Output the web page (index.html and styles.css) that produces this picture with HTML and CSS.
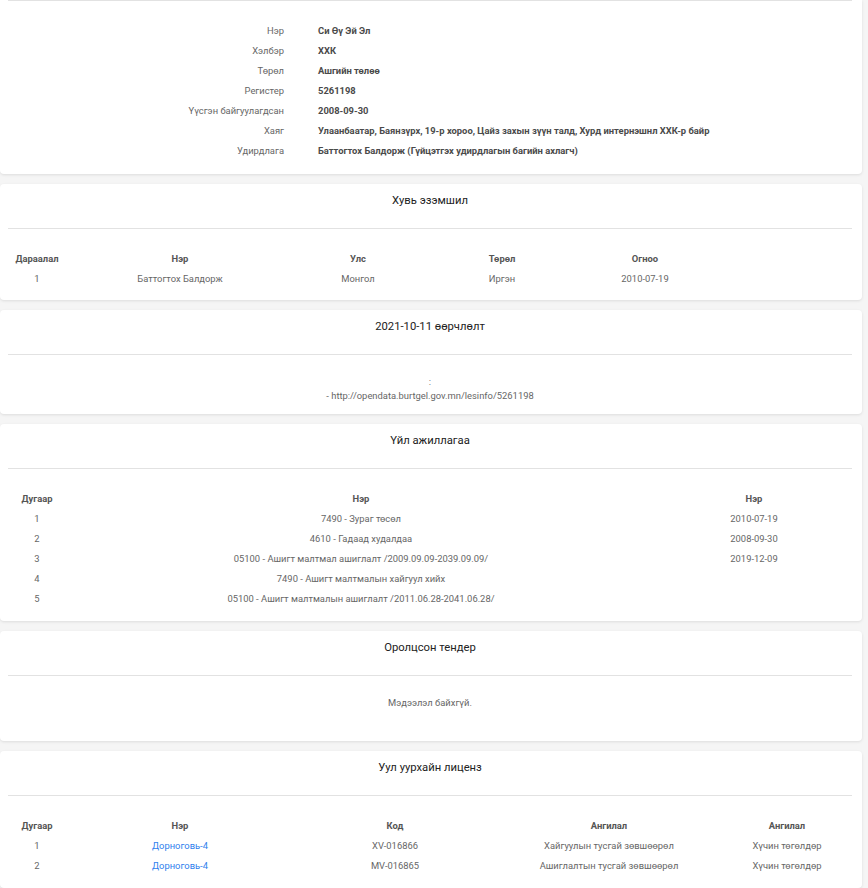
FILE: index.html
```html
<!DOCTYPE html>
<html lang="mn">
<head>
  <meta charset="UTF-8" />
  <meta name="viewport" content="width=device-width, initial-scale=1.0"/>
  <title>Си Өү Эй Эл ХХК</title>
  <link rel="stylesheet" href="styles.css">
</head>
<body>
  <div class="page">

    <div class="card card-cut">
      <hr class="divider">
      <div class="info">
        <div class="info-label">Нэр</div><div class="info-value">Си Өү Эй Эл</div>
        <div class="info-label">Хэлбэр</div><div class="info-value">ХХК</div>
        <div class="info-label">Төрөл</div><div class="info-value">Ашгийн төлөө</div>
        <div class="info-label">Регистер</div><div class="info-value">5261198</div>
        <div class="info-label">Үүсгэн байгуулагдсан</div><div class="info-value">2008-09-30</div>
        <div class="info-label">Хаяг</div><div class="info-value">Улаанбаатар, Баянзүрх, 19-р хороо, Цайз захын зүүн талд, Хурд интернэшнл ХХК-р байр</div>
        <div class="info-label">Удирдлага</div><div class="info-value">Баттогтох Балдорж (Гүйцэтгэх удирдлагын багийн ахлагч)</div>
      </div>
    </div>

    <div class="card">
      <h2 class="card-title">Хувь эзэмшил</h2>
      <hr class="divider">
      <table class="data owners">
        <tr>
          <th class="c-num">Дараалал</th>
          <th class="c-owner">Нэр</th>
          <th class="c-country">Улс</th>
          <th class="c-type">Төрөл</th>
          <th class="c-date">Огноо</th>
        </tr>
        <tr>
          <td>1</td>
          <td>Баттогтох Балдорж</td>
          <td>Монгол</td>
          <td>Иргэн</td>
          <td>2010-07-19</td>
        </tr>
      </table>
    </div>

    <div class="card">
      <h2 class="card-title">2021-10-11 өөрчлөлт</h2>
      <hr class="divider">
      <div class="note">
        <div>:</div>
        <div>- http://opendata.burtgel.gov.mn/lesinfo/5261198</div>
      </div>
    </div>

    <div class="card">
      <h2 class="card-title">Үйл ажиллагаа</h2>
      <hr class="divider">
      <table class="data full">
        <tr>
          <th class="c-num">Дугаар</th>
          <th class="c-activity">Нэр</th>
          <th>Нэр</th>
        </tr>
        <tr><td>1</td><td>7490 - Зураг төсөл</td><td>2010-07-19</td></tr>
        <tr><td>2</td><td>4610 - Гадаад худалдаа</td><td>2008-09-30</td></tr>
        <tr><td>3</td><td>05100 - Ашигт малтмал ашиглалт /2009.09.09-2039.09.09/</td><td>2019-12-09</td></tr>
        <tr><td>4</td><td>7490 - Ашигт малтмалын хайгуул хийх</td><td></td></tr>
        <tr><td>5</td><td>05100 - Ашигт малтмалын ашиглалт /2011.06.28-2041.06.28/</td><td></td></tr>
      </table>
    </div>

    <div class="card">
      <h2 class="card-title">Оролцсон тендер</h2>
      <hr class="divider">
      <p class="empty">Мэдээлэл байхгүй.</p>
    </div>

    <div class="card">
      <h2 class="card-title">Уул уурхайн лиценз</h2>
      <hr class="divider">
      <table class="data full">
        <tr>
          <th class="c-num">Дугаар</th>
          <th class="c-owner">Нэр</th>
          <th class="c-code">Код</th>
          <th class="c-kind">Ангилал</th>
          <th>Ангилал</th>
        </tr>
        <tr>
          <td>1</td>
          <td><a href="#">Дорноговь-4</a></td>
          <td>XV-016866</td>
          <td>Хайгуулын тусгай зөвшөөрөл</td>
          <td>Хүчин төгөлдөр</td>
        </tr>
        <tr>
          <td>2</td>
          <td><a href="#">Дорноговь-4</a></td>
          <td>MV-016865</td>
          <td>Ашиглалтын тусгай зөвшөөрөл</td>
          <td>Хүчин төгөлдөр</td>
        </tr>
      </table>
    </div>

  </div>
</body>
</html>
```

FILE: styles.css
```css
* {
  box-sizing: border-box;
}

body {
  margin: 0;
  font-family: Roboto, "Liberation Sans", sans-serif;
  font-size: 9.4px;
  color: #666;
  background: #f5f5f5;
}

.page {
  padding-right: 6px;
}

.card {
  background: #fff;
  border-radius: 4px;
  box-shadow: 0 1px 3px rgba(0, 0, 0, 0.1);
  padding: 10px 10px 11px 8px;
  margin-bottom: 10px;
}

.card-cut {
  padding-top: 0;
  padding-bottom: 13px;
  border-radius: 0 0 4px 4px;
}

.card-title {
  margin: 0 0 20px;
  font-size: 11.25px;
  line-height: 14px;
  font-weight: 400;
  color: #222;
  text-align: center;
}

.divider {
  margin: 0 0 20px;
  border: 0;
  border-top: 1px solid #e2e2e2;
}

.info {
  display: grid;
  grid-template-columns: 276px 1fr;
  column-gap: 34px;
  line-height: 20px;
}

.info-label {
  text-align: right;
  color: #666;
}

.info-value {
  font-weight: 700;
  color: #4a4a4a;
}

.data {
  border-collapse: collapse;
  table-layout: fixed;
  line-height: 20px;
}

.data th,
.data td {
  padding: 0;
  text-align: center;
  white-space: nowrap;
}

.data th {
  font-weight: 700;
  color: #555;
}

.data a {
  color: #2f80ed;
  text-decoration: none;
}

.owners {
  width: 700px;
}

.full {
  width: 100%;
  margin-bottom: 1px;
}

.c-num {
  width: 58px;
}

.c-owner {
  width: 228px;
}

.c-country {
  width: 128px;
}

.c-type {
  width: 160px;
}

.c-date {
  width: 126px;
}

.c-activity {
  width: 590px;
}

.c-code {
  width: 202px;
}

.c-kind {
  width: 226px;
}

.note {
  text-align: center;
  line-height: 14px;
}

.empty {
  margin: 0;
  padding-bottom: 20px;
  line-height: 14px;
  text-align: center;
}
```
